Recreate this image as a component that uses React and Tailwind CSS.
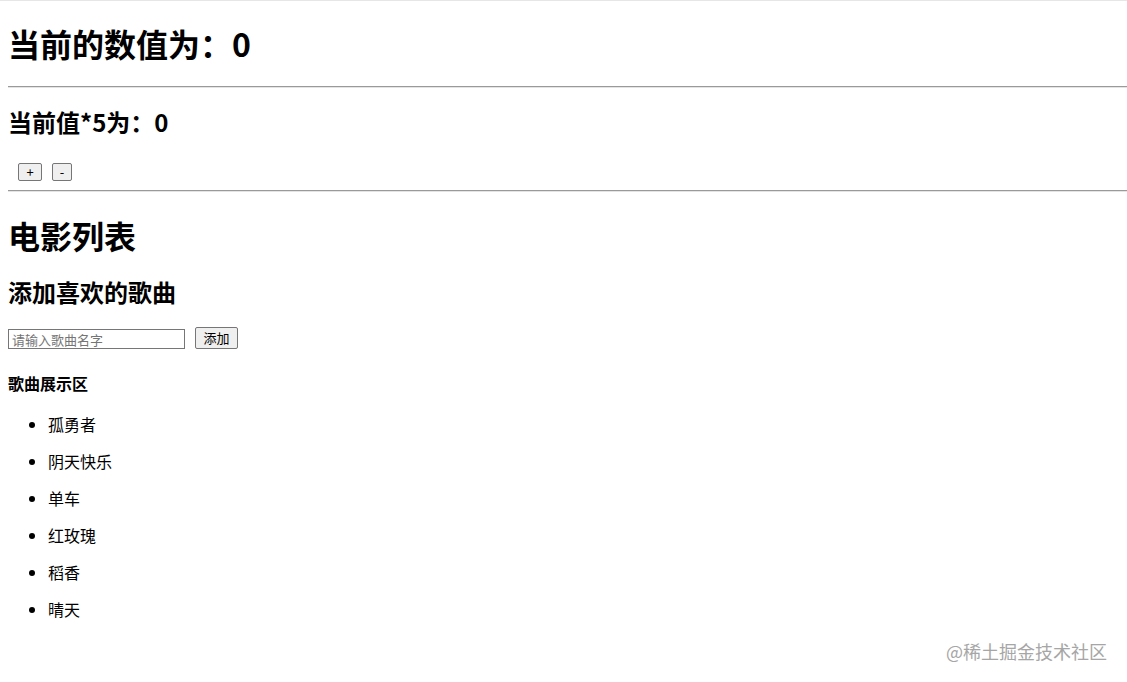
const songs = ["孤勇者", "阴天快乐", "单车", "红玫瑰", "稻香", "晴天"];

const Divider = () => (
  <div className="-mr-2 h-[2px] border-t border-[#9a9a9a] border-b border-b-[#e4e4e4]" />
);

const App = () => {
  return (
    <div className="relative min-h-[682px] overflow-hidden border-t border-[#e6e6e6] bg-white px-2 text-black font-['Noto_Sans_CJK_SC',sans-serif]">
      <h1 className="mt-[22px] text-[32px] font-bold leading-[40px]">当前的数值为：0</h1>
      <div className="mt-[23px]">
        <Divider />
      </div>
      <h2 className="mt-[18px] text-[24px] font-bold leading-[32px]">当前值*5为：0</h2>
      <div className="mt-[25px] flex gap-[10px] pl-[10px]">
        <button className="h-[18px] w-[24px] rounded-[2px] border border-[#767676] bg-[#efefef] text-[13px] leading-[16px]">
          +
        </button>
        <button className="h-[18px] w-[20px] rounded-[2px] border border-[#767676] bg-[#efefef] text-[13px] leading-[16px]">
          -
        </button>
      </div>
      <div className="mt-[9px]">
        <Divider />
      </div>
      <h1 className="mt-[23px] text-[32px] font-bold leading-[40px]">电影列表</h1>
      <h2 className="mt-[21px] text-[24px] font-bold leading-[32px]">添加喜欢的歌曲</h2>
      <div className="mt-[19px] flex items-end">
        <input
          type="text"
          placeholder="请输入歌曲名字"
          className="h-[20px] w-[177px] border border-[#767676] px-[3px] text-[13px] leading-[18px] placeholder:text-[#757575] outline-none"
        />
        <button className="ml-[10px] h-[22px] w-[43px] rounded-[2px] border border-[#767676] bg-[#efefef] text-[13px] leading-[20px]">
          添加
        </button>
      </div>
      <h4 className="mt-[24px] text-[16px] font-bold leading-[20px]">歌曲展示区</h4>
      <ul className="mt-[21px] flex list-disc flex-col gap-[17px] pl-[40px]">
        {songs.map((song) => (
          <li key={song} className="text-[16px] leading-[20px]">
            {song}
          </li>
        ))}
      </ul>
      <div className="absolute right-[20px] top-[639px] text-[18px] leading-[22px] text-[#a6a6a6]">
        @稀土掘金技术社区
      </div>
    </div>
  );
};

export default App;
